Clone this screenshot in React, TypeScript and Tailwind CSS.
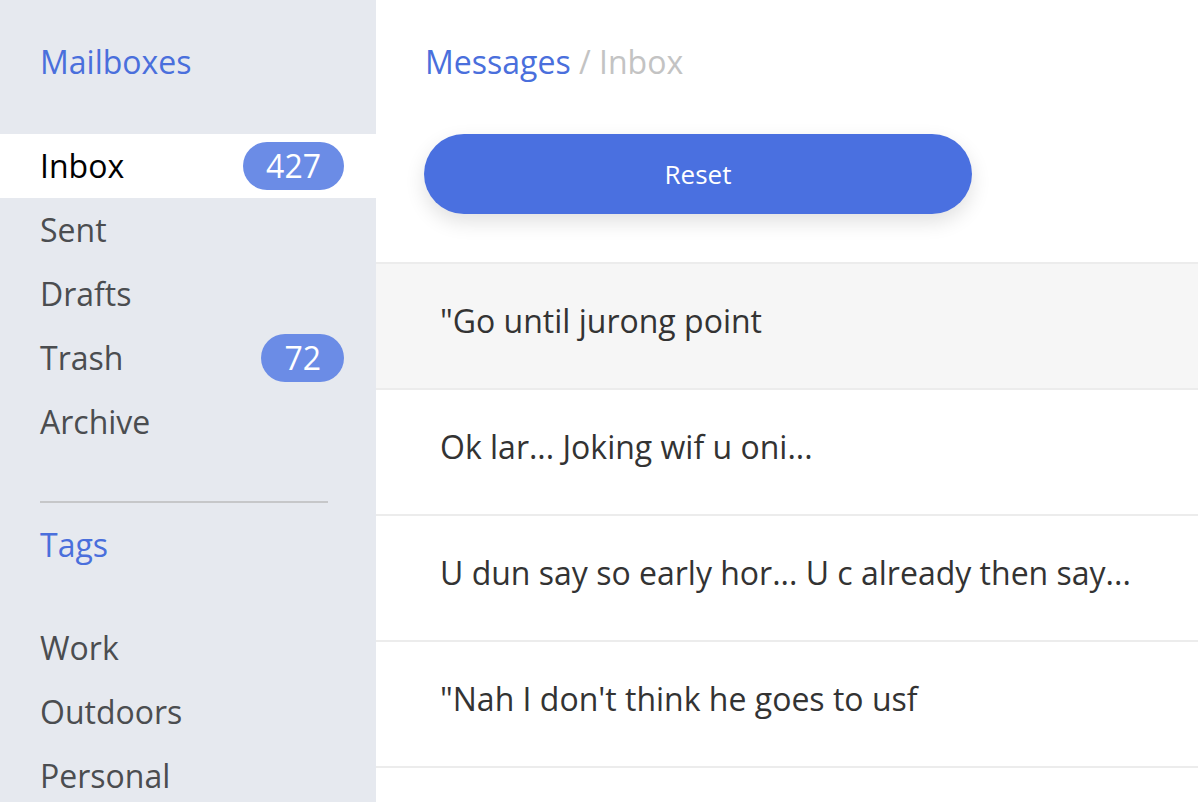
import React from 'react';

const MAILBOXES = [
  { name: 'Inbox', count: 427, active: true },
  { name: 'Sent' },
  { name: 'Drafts' },
  { name: 'Trash', count: 72 },
  { name: 'Archive' },
];

const TAGS = ['Work', 'Outdoors', 'Personal'];

const MESSAGES = [
  '"Go until jurong point',
  'Ok lar... Joking wif u oni...',
  'U dun say so early hor... U c already then say...',
  '"Nah I don\'t think he goes to usf',
];

export default function App() {
  return (
    <div className="flex h-[802px] w-full overflow-hidden bg-white font-['Open_Sans',sans-serif] text-[32px]">
      <aside className="w-[376px] shrink-0 bg-[#e6e9ef]">
        <div className="h-[134px] pl-[40px] pt-[30px] leading-[64px] text-[#4a6fdc]">Mailboxes</div>

        {MAILBOXES.map(box => (
          <div
            key={box.name}
            className={`flex h-16 items-center justify-between pl-[40px] pr-[32px] ${
              box.active ? 'bg-white text-black' : 'text-[#4b4d50]'
            }`}>
            <span>{box.name}</span>
            {box.count !== undefined && (
              <span className="flex h-12 items-center rounded-full bg-[#6b8ce6] px-[23px] text-white">
                {box.count}
              </span>
            )}
          </div>
        ))}

        <div className="mx-[40px] mt-[47px] h-[2px] w-[288px] bg-[#c6c7c9]" />

        <div className="mt-[10px] h-16 pl-[40px] leading-[64px] text-[#4a6fdc]">Tags</div>

        <div className="mt-[39px]">
          {TAGS.map(tag => (
            <div key={tag} className="h-16 pl-[40px] leading-[64px] text-[#4b4d50]">
              {tag}
            </div>
          ))}
        </div>
      </aside>

      <main className="min-w-0 flex-1">
        <div className="pl-[49px] pt-[30px] leading-[64px]">
          <span className="text-[#4a6fdc]">Messages</span>
          <span className="text-[#c3c3c3]"> / Inbox</span>
        </div>

        <button
          type="button"
          className="ml-[48px] mt-[40px] flex h-20 w-[548px] items-center justify-center rounded-full bg-[#4a70e0] text-[26px] text-white shadow-[0_8px_20px_rgba(0,0,0,0.12)]">
          Reset
        </button>

        <ul className="mt-[48px] border-t-2 border-[#ececec]">
          {MESSAGES.map((msg, i) => (
            <li
              key={msg}
              className={`flex h-[126px] items-center border-b-2 border-[#ececec] pb-[10px] pl-[64px] text-[#333] ${
                i === 0 ? 'bg-[#f6f6f6]' : ''
              }`}>
              {msg}
            </li>
          ))}
        </ul>
      </main>
    </div>
  );
}
